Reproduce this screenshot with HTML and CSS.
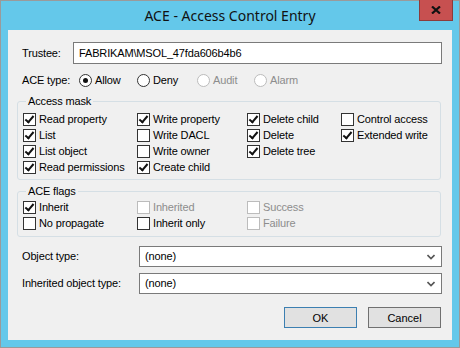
FILE: index.html
```html
<!DOCTYPE html>
<html lang="en">
<head>
    <meta charset="UTF-8">
    <title>ACE - Access Control Entry</title>
    <link rel="stylesheet" href="styles.css">
</head>
<body>
    <div class="window">
        <div class="titlebar">
            <span></span>
            <span class="title">ACE - Access Control Entry</span>
            <span class="close">
                <svg width="10" height="8" viewBox="0 0 10 8"><path d="M1 0.5 L9 7.5 M9 0.5 L1 7.5" stroke="#111" stroke-width="2.2"/></svg>
            </span>
        </div>

        <div class="client">
            <div class="row trustee">
                <span class="label">Trustee:</span>
                <div class="textbox">FABRIKAM\MSOL_47fda606b4b6</div>
            </div>

            <div class="row acetype">
                <span class="label">ACE type:</span>
                <span class="opt w58"><i class="radio on"></i>Allow</span>
                <span class="opt w60"><i class="radio"></i>Deny</span>
                <span class="opt w57 off"><i class="radio"></i>Audit</span>
                <span class="opt off"><i class="radio"></i>Alarm</span>
            </div>

            <fieldset class="group mask">
                <legend>Access mask</legend>
                <div class="cols">
                    <div class="col c1">
                        <span class="opt"><i class="check on"></i>Read property</span>
                        <span class="opt"><i class="check on"></i>List</span>
                        <span class="opt"><i class="check on"></i>List object</span>
                        <span class="opt"><i class="check on"></i>Read permissions</span>
                    </div>
                    <div class="col c2">
                        <span class="opt"><i class="check on"></i>Write property</span>
                        <span class="opt"><i class="check"></i>Write DACL</span>
                        <span class="opt"><i class="check"></i>Write owner</span>
                        <span class="opt"><i class="check on"></i>Create child</span>
                    </div>
                    <div class="col c3">
                        <span class="opt"><i class="check on"></i>Delete child</span>
                        <span class="opt"><i class="check on"></i>Delete</span>
                        <span class="opt"><i class="check on"></i>Delete tree</span>
                    </div>
                    <div class="col">
                        <span class="opt"><i class="check"></i>Control access</span>
                        <span class="opt"><i class="check on"></i>Extended write</span>
                    </div>
                </div>
            </fieldset>

            <fieldset class="group flags">
                <legend>ACE flags</legend>
                <div class="cols">
                    <div class="col c1">
                        <span class="opt"><i class="check on"></i>Inherit</span>
                        <span class="opt"><i class="check"></i>No propagate</span>
                    </div>
                    <div class="col c2">
                        <span class="opt off"><i class="check"></i>Inherited</span>
                        <span class="opt"><i class="check"></i>Inherit only</span>
                    </div>
                    <div class="col c3">
                        <span class="opt off"><i class="check"></i>Success</span>
                        <span class="opt off"><i class="check"></i>Failure</span>
                    </div>
                </div>
            </fieldset>

            <div class="row combo-row first">
                <span class="label">Object type:</span>
                <div class="combo">(none)<svg width="8" height="6" viewBox="0 0 8 6"><path d="M0.5 1 L4 4.5 L7.5 1" stroke="#555" stroke-width="1.6" fill="none"/></svg></div>
            </div>
            <div class="row combo-row">
                <span class="label">Inherited object type:</span>
                <div class="combo">(none)<svg width="8" height="6" viewBox="0 0 8 6"><path d="M0.5 1 L4 4.5 L7.5 1" stroke="#555" stroke-width="1.6" fill="none"/></svg></div>
            </div>

            <div class="buttons">
                <button class="btn default">OK</button>
                <button class="btn">Cancel</button>
            </div>
        </div>
    </div>
</body>
</html>
```

FILE: styles.css
```css
* {
    margin: 0;
    padding: 0;
    box-sizing: border-box;
}

body {
    font-family: "Liberation Sans", Arial, sans-serif;
    font-size: 11px;
    line-height: 13px;
    letter-spacing: -0.15px;
    color: #000;
    background: #fff;
}

.window {
    width: 460px;
    height: 348px;
    border: 1px solid #9a9a9a;
    background-color: #64c8ea;
    padding: 0 7px 7px 7px;
    display: flex;
    flex-direction: column;
}

.titlebar {
    height: 29px;
    display: grid;
    grid-template-columns: 34px 1fr 34px;
    align-items: start;
}

.title {
    font-family: "Noto Sans", sans-serif;
    font-size: 14px;
    line-height: 20px;
    letter-spacing: 0;
    margin-top: 5px;
    text-align: center;
    color: #111;
}

.close {
    width: 34px;
    height: 21px;
    margin-top: -1px;
    margin-left: 1px;
    background-color: #c75050;
    border: 1px solid #8c3b3b;
    border-top: none;
    display: flex;
    align-items: center;
    justify-content: center;
}

.client {
    flex: 1;
    background-color: #f0f0f0;
    padding: 12px 10px 0 9px;
    display: flex;
    flex-direction: column;
}

.row {
    display: flex;
    align-items: center;
    padding-left: 5px;
}

.trustee .label {
    width: 51px;
}

.textbox {
    flex: 1;
    height: 22px;
    background: #fff;
    border: 1px solid #7a7a7a;
    padding-left: 5px;
    display: flex;
    align-items: center;
}

.acetype {
    margin-top: 8px;
    height: 16px;
}

.acetype .label {
    width: 57px;
}

.opt {
    display: flex;
    align-items: center;
    height: 16px;
    white-space: nowrap;
}

.w58 { width: 58px; }
.w60 { width: 60px; }
.w57 { width: 57px; }

.opt.off {
    color: #8d8d8d;
}

.radio {
    width: 13px;
    height: 13px;
    border: 1px solid #333;
    border-radius: 50%;
    background: #fff;
    margin-right: 3px;
    display: flex;
    align-items: center;
    justify-content: center;
}

.radio.on::after {
    content: "";
    width: 5px;
    height: 5px;
    border-radius: 50%;
    background: #111;
}

.off .radio,
.off .check {
    border-color: #bcbcbc;
}

.check {
    width: 13px;
    height: 13px;
    border: 1px solid #333;
    background: #fff;
    margin-right: 3px;
    position: relative;
}

.check.on::after {
    content: "";
    position: absolute;
    left: 3px;
    top: 0px;
    width: 3px;
    height: 7px;
    border-right: 2px solid #111;
    border-bottom: 2px solid #111;
    transform: rotate(40deg);
}

.group {
    border: 1px solid #d5dfe5;
    border-radius: 3px;
    margin-right: 1px;
    padding: 0 0 0 5px;
}

.group legend {
    margin-left: 3px;
    padding: 0 2px;
    line-height: 13px;
}

.mask {
    margin-top: 7px;
    padding-top: 3px;
    padding-bottom: 4px;
}

.flags {
    margin-top: 5px;
    padding-top: 1px;
    padding-bottom: 5px;
}

.cols {
    display: flex;
}

.col {
    display: flex;
    flex-direction: column;
}

.c1 { width: 114px; }
.c2 { width: 110px; }
.c3 { width: 94px; }

.combo-row {
    margin-top: 6px;
}

.combo-row.first {
    margin-top: 9px;
}

.combo-row .label {
    width: 117px;
}

.combo {
    flex: 1;
    height: 21px;
    background: #fff;
    border: 1px solid #7a7a7a;
    padding: 0 6px 0 5px;
    display: flex;
    align-items: center;
    justify-content: space-between;
}

.buttons {
    display: flex;
    justify-content: flex-end;
    gap: 11px;
    margin-top: 13px;
    margin-right: 1px;
}

.btn {
    width: 73px;
    height: 21px;
    font-family: inherit;
    font-size: 11px;
    background-color: #e1e1e1;
    border: 1px solid #707070;
    color: #000;
}

.btn.default {
    border-color: #3c7fb1;
}
```
